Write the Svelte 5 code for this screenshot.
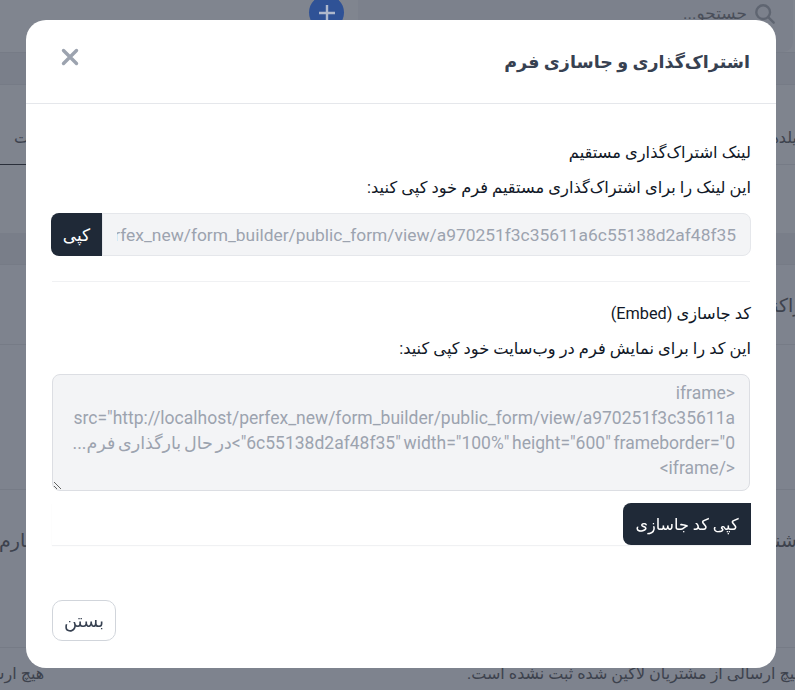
<script>
	const embedCode = `<iframe src="http://localhost/perfex_new/form_builder/public_form/view/a970251f3c35611a6c55138d2af48f35" width="100%" height="600" frameborder="0">در حال بارگذاری فرم...</iframe>`;
	const directLink = 'http://localhost/perfex_new/form_builder/public_form/view/a970251f3c35611a6c55138d2af48f35';
</script>

<div class="page" dir="rtl">
	<div class="topbar">
		<div class="search">
			<svg class="search-icon" viewBox="0 0 24 24" width="22" height="22" fill="none" stroke="#5f6571" stroke-width="2.6">
				<circle cx="10" cy="10" r="7.5"/>
				<path d="M15.5 15.5l6 6" stroke-linecap="round"/>
			</svg>
			<span>جستجو...</span>
		</div>
		<div class="add">
			<svg viewBox="0 0 20 20" width="20" height="20" stroke="#aeb8cc" stroke-width="2.4">
				<path d="M10 2v16M2 10h16"/>
			</svg>
		</div>
	</div>
	<div class="band"></div>
	<div class="tabs">
		<span class="tab">فیلدها</span>
		<span class="tab active">تنظیمات</span>
	</div>
	<div class="tabs-body"></div>
	<div class="band2"></div>
	<div class="row tall"><span class="side first">تراکنش‌ها</span></div>
	<div class="row tall2"></div>
	<div class="row tall3"><span class="side">شناسه</span><span class="side left">چهارم</span></div>
	<div class="foot">
		<span>هیچ ارسالی از مشتریان لاگین شده ثبت نشده است.</span>
		<span class="foot-left">هیچ ارسالی</span>
	</div>
</div>

<div class="overlay">
	<div class="modal" dir="rtl">
		<header>
			<h2>اشتراک‌گذاری و جاسازی فرم</h2>
			<svg class="close" viewBox="0 0 18 18" width="18" height="18" stroke="#9ca3af" stroke-width="3.4" stroke-linecap="round">
				<path d="M2.5 2.5l13 13M15.5 2.5l-13 13"/>
			</svg>
		</header>
		<div class="content">
			<h3>لینک اشتراک‌گذاری مستقیم</h3>
			<p>این لینک را برای اشتراک‌گذاری مستقیم فرم خود کپی کنید:</p>
			<div class="copy-row">
				<input readonly value={directLink}>
				<button class="dark small">کپی</button>
			</div>
			<hr>
			<h3>کد جاسازی (Embed)</h3>
			<p>این کد را برای نمایش فرم در وب‌سایت خود کپی کنید:</p>
			<textarea readonly value={embedCode}></textarea>
			<div class="embed-actions">
				<button class="dark">کپی کد جاسازی</button>
			</div>
		</div>
		<footer>
			<button class="ghost">بستن</button>
		</footer>
	</div>
</div>

<style>
	:global(body)
	{
		background: #7e838e;
		font-family: Roboto, "DejaVu Sans", sans-serif;
		overflow: hidden;
	}

	.page
	{
		height: 690px;
		overflow: hidden;
		color: #3d424d;
		font-size: 15px;
	}

	.topbar
	{
		height: 53px;
		box-sizing: border-box;
		display: flex;
		gap: 14px;
		background: #80858f;
		border-bottom: 1px solid #767b86;
	}

	.search
	{
		width: 435px;
		height: 52px;
		margin-right: 2px;
		box-sizing: border-box;
		border-radius: 0 0 10px 10px;
		background: #7c818c;
		display: flex;
		gap: 7px;
		padding: 3px 17px 0 0;
		color: #4a4f5a;
		font-size: 17px;
	}

	.search-icon
	{
		flex: none;
	}

	.add
	{
		width: 35px;
		height: 35px;
		margin-top: -5px;
		border-radius: 50%;
		background: #2f5296;
		display: flex;
		align-items: center;
		justify-content: center;
	}

	.band
	{
		height: 32px;
		box-sizing: border-box;
		background: #7a7f8a;
		border-bottom: 1px solid #767b86;
	}

	.tabs
	{
		height: 80px;
		box-sizing: border-box;
		background: #7f848e;
		border-bottom: 1px solid #767b86;
		display: flex;
		justify-content: space-between;
		align-items: stretch;
		font-size: 16px;
	}

	.tab
	{
		margin-right: -10px;
		padding-top: 43px;
	}

	.tab.active
	{
		margin: 0 0 -1px 0;
		padding-left: 14px;
		border-bottom: 1px solid #2a2f3a;
	}

	.tabs-body
	{
		height: 68px;
		background: #7f848e;
	}

	.band2
	{
		height: 32px;
		box-sizing: border-box;
		background: #797e89;
		border-bottom: 1px solid #767b86;
	}

	.row
	{
		border-bottom: 1px solid #767b86;
		box-sizing: border-box;
		display: flex;
		justify-content: space-between;
	}

	.tall { height: 80px; padding-top: 29px; }
	.tall2 { height: 145px; }
	.tall3 { height: 158px; padding-top: 39px; }

	.side
	{
		font-size: 19px;
		margin-right: -2px;
	}

	.side.first
	{
		margin-right: -14px;
	}

	.side.left
	{
		margin: 0 0 0 -1px;
	}

	.foot
	{
		display: flex;
		justify-content: space-between;
		padding-top: 16px;
		font-size: 16px;
		line-height: 20px;
	}

	.foot span:first-child
	{
		margin-right: -8px;
	}

	.foot-left
	{
		margin-left: -32px;
	}

	.overlay
	{
		position: fixed;
		inset: 0;
	}

	.modal
	{
		position: absolute;
		left: 26px;
		top: 20px;
		width: 750px;
		height: 648px;
		background: #fff;
		border-radius: 20px;
		box-sizing: border-box;
		display: flex;
		flex-direction: column;
		color: #111827;
		font-size: 16px;
	}

	header
	{
		height: 84px;
		flex: none;
		box-sizing: border-box;
		border-bottom: 1px solid #e5e7eb;
		padding: 0 26px 0 35px;
		display: flex;
		align-items: center;
		justify-content: space-between;
	}

	h2
	{
		margin: 0;
		font-size: 17.5px;
		font-weight: 700;
		color: #374151;
	}

	.close
	{
		margin-top: -10px;
	}

	.content
	{
		padding: 37px 25px 0;
		flex: 1;
	}

	h3, p
	{
		margin: 0;
		font-size: 16.3px;
		font-weight: 400;
		line-height: 24px;
	}

	p
	{
		margin-top: 11px;
	}

	.copy-row
	{
		direction: ltr;
		display: flex;
		height: 43px;
		margin-top: 13px;
	}

	.copy-row input
	{
		direction: rtl;
		flex: 1;
		min-width: 0;
		order: 2;
		box-sizing: border-box;
		background: #f3f4f6;
		border: 1px solid #e5e7eb;
		border-radius: 0 8px 8px 0;
		color: #9ca3af;
		font: 17.4px Roboto, sans-serif;
		padding: 0 14px;
		outline: none;
	}

	button
	{
		font: inherit;
		cursor: pointer;
	}

	.dark
	{
		background: #1f2937;
		color: #fff;
		border: none;
		height: 42px;
		padding: 0 8px;
	}

	.small
	{
		order: 1;
		width: 51px;
		height: 43px;
		border-radius: 8px 0 0 8px;
		font-size: 17px;
	}

	hr
	{
		border: none;
		border-top: 1px solid #f0f1f3;
		margin: 25px 1px 20px;
	}

	textarea
	{
		display: block;
		width: 698px;
		height: 117px;
		margin: 13px 1px 0;
		box-sizing: border-box;
		background: #f3f4f6;
		border: 1px solid #dcdee3;
		border-radius: 8px;
		color: #9ca3af;
		font: 17.5px/25px Roboto, "DejaVu Sans", sans-serif;
		word-spacing: -1.6px;
		padding: 6px 14px 6px 16px;
		outline: none;
	}

	.embed-actions
	{
		margin: 12px 1px 0;
		display: flex;
		box-shadow: 0 1px 1px #f0f1f3;
	}

	.embed-actions .dark
	{
		border-radius: 8px 0 0 8px;
		width: 128px;
		margin-right: -1px;
	}

	footer
	{
		padding: 0 26px 27px;
		display: flex;
		justify-content: flex-end;
	}

	.ghost
	{
		width: 64px;
		height: 41px;
		background: #fff;
		border: 1px solid #d1d5db;
		border-radius: 10px;
		color: #374151;
		font-size: 18px;
	}
</style>
